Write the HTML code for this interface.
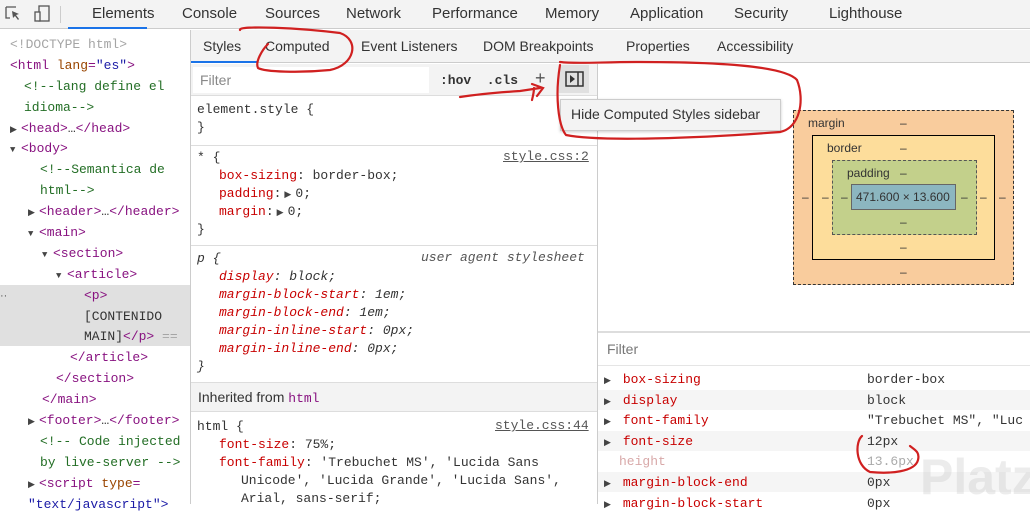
<!DOCTYPE html>
<html><head><meta charset="utf-8"><style>
*{margin:0;padding:0;box-sizing:border-box}
body{width:1030px;height:504px;overflow:hidden;background:#fff;position:relative;font-family:"Liberation Sans",sans-serif;color:#333}
.a{position:absolute;white-space:nowrap}
.m{font-family:"Liberation Mono",monospace;font-size:13px}
.ui{font-size:14px;color:#333}
.tag{color:#881280}.an{color:#994500}.av{color:#1a1aa6}.cm{color:#236e25}.gr{color:#a5a5a5}
.pn{color:#c80000}.it{font-style:italic}
.tri{display:inline-block;width:11px;font-size:9px;color:#444}
.L>div{height:20.9px;line-height:20.9px}
.S>div{height:18px;line-height:18px}
.C>div{height:20.6px;line-height:20.6px}
</style></head><body>
<div class="a" style="left:0;top:0;width:1030px;height:29px;background:#f3f3f3;border-bottom:1px solid #ccc"></div>
<svg class="a" style="left:4px;top:4px" width="50" height="20"><path d="M2 3h10M2 3v11h4" stroke="#555" fill="none" stroke-width="1.3"/><path d="M8 7l7 3-3 1 3 4-1 1-3-4-2 2z" fill="#555"/><rect x="35" y="2" width="10" height="15" fill="none" stroke="#555" stroke-width="1.3"/><rect x="31" y="8" width="5" height="9" fill="#f3f3f3" stroke="#555" stroke-width="1.3"/></svg>
<div class="a" style="left:60px;top:6px;width:1px;height:17px;background:#ccc"></div>
<div class="a ui" style="left:92px;top:5px;font-size:15px">Elements</div>
<div class="a" style="left:68px;top:27px;width:79px;height:2px;background:#1a73e8"></div>
<div class="a ui" style="left:182px;top:5px;font-size:15px">Console</div>
<div class="a ui" style="left:265px;top:5px;font-size:15px">Sources</div>
<div class="a ui" style="left:346px;top:5px;font-size:15px">Network</div>
<div class="a ui" style="left:432px;top:5px;font-size:15px">Performance</div>
<div class="a ui" style="left:545px;top:5px;font-size:15px">Memory</div>
<div class="a ui" style="left:630px;top:5px;font-size:15px">Application</div>
<div class="a ui" style="left:734px;top:5px;font-size:15px">Security</div>
<div class="a ui" style="left:829px;top:5px;font-size:15px">Lighthouse</div>

<div class="a" style="left:190px;top:30px;width:1px;height:474px;background:#ccc"></div>
<div class="a" style="left:0;top:285px;width:190px;height:61px;background:#e0e0e0"></div>
<div class="a m L" style="left:10px;top:35px">
<div class="gr">&lt;!DOCTYPE html&gt;</div>
<div><span class="tag">&lt;html</span> <span class="an">lang</span><span class="tag">=</span><span class="av">"es"</span><span class="tag">&gt;</span></div>
<div class="cm" style="padding-left:14px">&lt;!--lang define el</div>
<div class="cm" style="padding-left:14px">idioma--&gt;</div>
<div><span class="tri">▶</span><span class="tag">&lt;head&gt;</span>…<span class="tag">&lt;/head&gt;</span></div>
<div><span class="tri">▼</span><span class="tag">&lt;body&gt;</span></div>
<div class="cm" style="padding-left:30px">&lt;!--Semantica de</div>
<div class="cm" style="padding-left:30px">html--&gt;</div>
<div style="padding-left:18px"><span class="tri">▶</span><span class="tag">&lt;header&gt;</span>…<span class="tag">&lt;/header&gt;</span></div>
<div style="padding-left:18px"><span class="tri">▼</span><span class="tag">&lt;main&gt;</span></div>
<div style="padding-left:32px"><span class="tri">▼</span><span class="tag">&lt;section&gt;</span></div>
<div style="padding-left:46px"><span class="tri">▼</span><span class="tag">&lt;article&gt;</span></div>
<div style="padding-left:74px" class="tag">&lt;p&gt;</div>
<div style="padding-left:74px">[CONTENIDO</div>
<div style="padding-left:74px">MAIN]<span class="tag">&lt;/p&gt;</span> <span class="gr">==</span></div>
<div style="padding-left:60px" class="tag">&lt;/article&gt;</div>
<div style="padding-left:46px" class="tag">&lt;/section&gt;</div>
<div style="padding-left:32px" class="tag">&lt;/main&gt;</div>
<div style="padding-left:18px"><span class="tri">▶</span><span class="tag">&lt;footer&gt;</span>…<span class="tag">&lt;/footer&gt;</span></div>
<div class="cm" style="padding-left:30px">&lt;!-- Code injected</div>
<div class="cm" style="padding-left:30px">by live-server --&gt;</div>
<div style="padding-left:18px"><span class="tri">▶</span><span class="tag">&lt;script</span> <span class="an">type</span><span class="tag">=</span></div>
<div style="padding-left:18px" class="av">"text/javascript"&gt;</div>
</div>
<div class="a" style="left:0;top:290px;font-size:11px;color:#555">··</div>

<div class="a" style="left:191px;top:30px;width:839px;height:33px;background:#f3f3f3;border-bottom:1px solid #ccc"></div>
<div class="a ui" style="left:203px;top:38px">Styles</div>
<div class="a" style="left:191px;top:61px;width:67px;height:2px;background:#1a73e8"></div>
<div class="a ui" style="left:265px;top:38px">Computed</div>
<div class="a ui" style="left:361px;top:38px">Event Listeners</div>
<div class="a ui" style="left:483px;top:38px">DOM Breakpoints</div>
<div class="a ui" style="left:626px;top:38px">Properties</div>
<div class="a ui" style="left:717px;top:38px">Accessibility</div>

<div class="a" style="left:191px;top:64px;width:406px;height:32px;background:#f3f3f3;border-bottom:1px solid #ddd"></div>
<div class="a" style="left:193px;top:67px;width:236px;height:26px;background:#fff"></div>
<div class="a ui" style="left:200px;top:72px;color:#888;font-size:14px">Filter</div>
<div class="a m" style="left:440px;top:73px;font-weight:bold;color:#333">:hov&nbsp; .cls</div>
<div class="a" style="left:535px;top:68px;font-size:18px;color:#555">+</div>
<div class="a" style="left:559px;top:65px;width:30px;height:28px;background:#e0e0e0"></div>
<svg class="a" style="left:565px;top:71px" width="20" height="17"><rect x="1" y="1" width="17" height="14" fill="none" stroke="#333" stroke-width="1.5"/><line x1="13" y1="1" x2="13" y2="15" stroke="#333" stroke-width="1.5"/><path d="M5 4l5 4-5 4z" fill="#333"/></svg>
<div class="a" style="left:597px;top:64px;width:1px;height:440px;background:#ccc"></div>

<div class="a m S" style="left:197px;top:101px"><div>element.style {</div><div>}</div></div>
<div class="a" style="left:191px;top:145px;width:406px;height:1px;background:#ddd"></div>
<div class="a m S" style="left:197px;top:149px">
<div>* {</div>
<div style="padding-left:22px"><span class="pn">box-sizing</span>: border-box;</div>
<div style="padding-left:22px"><span class="pn">padding</span>:<span class="tri" style="margin-left:3px">▶</span>0;</div>
<div style="padding-left:22px"><span class="pn">margin</span>:<span class="tri" style="margin-left:3px">▶</span>0;</div>
<div>}</div></div>
<div class="a m" style="left:503px;top:149px;color:#555;text-decoration:underline">style.css:2</div>
<div class="a" style="left:191px;top:245px;width:406px;height:1px;background:#ddd"></div>
<div class="a m it S" style="left:197px;top:250px">
<div>p {</div>
<div style="padding-left:22px"><span class="pn">display</span>: block;</div>
<div style="padding-left:22px"><span class="pn">margin-block-start</span>: 1em;</div>
<div style="padding-left:22px"><span class="pn">margin-block-end</span>: 1em;</div>
<div style="padding-left:22px"><span class="pn">margin-inline-start</span>: 0px;</div>
<div style="padding-left:22px"><span class="pn">margin-inline-end</span>: 0px;</div>
<div>}</div></div>
<div class="a m it" style="left:421px;top:250px;color:#555">user agent stylesheet</div>
<div class="a" style="left:191px;top:382px;width:406px;height:30px;background:#f3f3f3;border-top:1px solid #ddd;border-bottom:1px solid #ddd"></div>
<div class="a ui" style="left:198px;top:389px">Inherited from <span class="m tag">html</span></div>
<div class="a m S" style="left:197px;top:418px">
<div>html {</div>
<div style="padding-left:22px"><span class="pn">font-size</span>: 75%;</div>
<div style="padding-left:22px"><span class="pn">font-family</span>: 'Trebuchet MS', 'Lucida Sans</div>
<div style="padding-left:44px">Unicode', 'Lucida Grande', 'Lucida Sans',</div>
<div style="padding-left:44px">Arial, sans-serif;</div></div>
<div class="a m" style="left:495px;top:418px;color:#555;text-decoration:underline">style.css:44</div>

<div class="a" style="left:560px;top:99px;width:221px;height:32px;background:#f3f3f3;border:1px solid #ccc;box-shadow:0 1px 3px rgba(0,0,0,.2)"></div>
<div class="a ui" style="left:571px;top:106px">Hide Computed Styles sidebar</div>

<div class="a" style="left:793px;top:110px;width:221px;height:175px;background:#f9cc9d;border:1px dashed #333"></div>
<div class="a" style="left:812px;top:135px;width:183px;height:125px;background:#fddd9b;border:1px solid #000"></div>
<div class="a" style="left:832px;top:160px;width:145px;height:75px;background:#c3d08b;border:1px dashed #555"></div>
<div class="a" style="left:851px;top:184px;width:105px;height:26px;background:#8cb6c0;border:1px solid #666"></div>
<div class="a" style="left:808px;top:116px;font-size:12px">margin</div>
<div class="a" style="left:827px;top:141px;font-size:12px">border</div>
<div class="a" style="left:847px;top:166px;font-size:12px">padding</div>
<div class="a" style="left:856px;top:190px;font-size:12px">471.600 × 13.600</div>
<div class="a" style="left:900px;top:116px;font-size:12px">–</div>
<div class="a" style="left:900px;top:141px;font-size:12px">–</div>
<div class="a" style="left:900px;top:166px;font-size:12px">–</div>
<div class="a" style="left:900px;top:215px;font-size:12px">–</div>
<div class="a" style="left:900px;top:240px;font-size:12px">–</div>
<div class="a" style="left:900px;top:265px;font-size:12px">–</div>
<div class="a" style="left:802px;top:190px;font-size:12px">–</div>
<div class="a" style="left:822px;top:190px;font-size:12px">–</div>
<div class="a" style="left:841px;top:190px;font-size:12px">–</div>
<div class="a" style="left:961px;top:190px;font-size:12px">–</div>
<div class="a" style="left:980px;top:190px;font-size:12px">–</div>
<div class="a" style="left:999px;top:190px;font-size:12px">–</div>

<div class="a" style="left:598px;top:331px;width:432px;height:2px;background:#ddd"></div>
<div class="a" style="left:598px;top:365px;width:432px;height:1px;background:#e5e5e5"></div>
<div class="a ui" style="left:607px;top:341px;color:#777">Filter</div>
<div class="a" style="left:598px;top:390px;width:432px;height:20px;background:#f5f5f5"></div>
<div class="a" style="left:598px;top:431px;width:432px;height:20px;background:#f5f5f5"></div>
<div class="a" style="left:598px;top:472px;width:432px;height:20px;background:#f5f5f5"></div>
<div class="a" style="left:920px;top:448px;font-size:50px;font-weight:bold;color:rgba(200,200,200,.35)">Platzi</div>
<div class="a m C" style="left:604px;top:370px">
<div><span class="tri">▶</span> <span class="pn">box-sizing</span></div>
<div><span class="tri">▶</span> <span class="pn">display</span></div>
<div><span class="tri">▶</span> <span class="pn">font-family</span></div>
<div><span class="tri">▶</span> <span class="pn">font-size</span></div>
<div style="padding-left:15px;color:#d8a8a8">height</div>
<div><span class="tri">▶</span> <span class="pn">margin-block-end</span></div>
<div><span class="tri">▶</span> <span class="pn">margin-block-start</span></div></div>
<div class="a m C" style="left:867px;top:370px">
<div>border-box</div><div>block</div><div>"Trebuchet MS", "Luc</div><div>12px</div><div style="color:#aaa">13.6px</div><div>0px</div><div>0px</div></div>

<svg class="a" style="left:0;top:0" width="1030" height="504" fill="none" stroke="#d02020" stroke-width="2.2" stroke-linecap="round">
<path d="M240 30 C238 25 300 28 340 33 C360 40 355 65 330 70 C300 73 265 72 258 68 C255 62 262 50 268 44"/>
<path d="M460 97 C480 94 505 92 520 91 L540 88 M532 84 L543 88 L537 96 M534 88 C534 92 533 96 532 100"/>
<path d="M560 65 C555 95 558 125 566 135 C600 142 700 138 780 132 C800 128 805 100 797 80 C785 66 720 62 640 62 C600 62 575 64 560 62"/>
<path d="M862 436 C855 442 855 465 870 472 C890 474 915 472 918 460 C920 452 915 450 910 446"/>
</svg>
</body></html>
